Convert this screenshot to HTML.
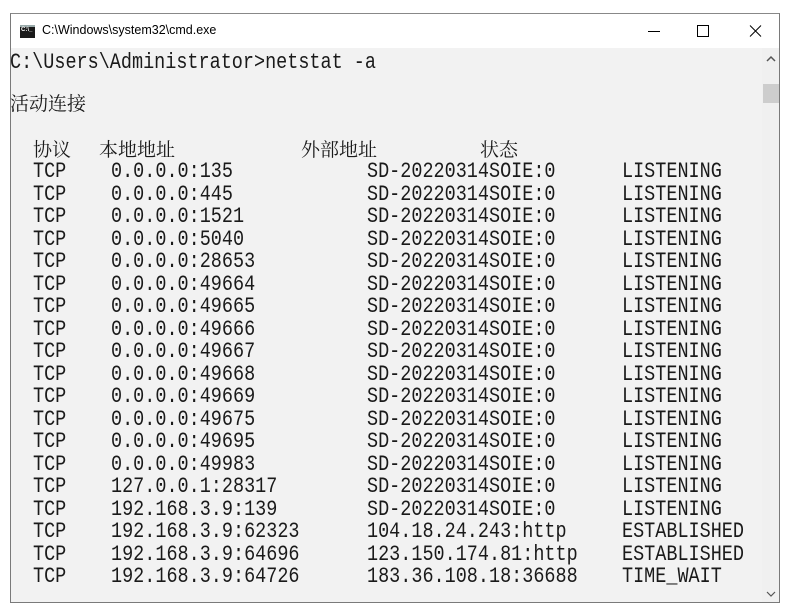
<!DOCTYPE html>
<html><head><meta charset="utf-8"><style>
body{margin:0;width:796px;height:613px;background:#fff;position:relative;overflow:hidden;font-family:"Liberation Mono","Noto Serif CJK SC",monospace}
.win{position:absolute;left:10px;top:13px;width:770px;height:590px;border:1px solid #7a7a7a;border-top-color:#888;background:#f2f2f2;box-sizing:border-box}
.title{position:absolute;left:0;top:0;right:0;height:34px;background:#fff}
.ttext{position:absolute;left:31px;top:9px;font:12.5px "Liberation Sans",sans-serif;color:#000}
.icon{position:absolute;left:9px;top:11px;width:15px;height:11px;background:#1a1a1a;border-top:2px solid #9aa}
.icon span{position:absolute;left:1px;top:0px;font:bold 6px "Liberation Sans",sans-serif;color:#fff}
.sb{position:absolute;right:0;top:34px;width:17px;bottom:0;background:#f0f0f0}
.thumb{position:absolute;right:0;top:70px;width:16px;height:19px;background:#cdcdcd}
.t{position:absolute;font-size:22px;line-height:22px;color:#1a1a1a;white-space:pre;transform:scaleX(0.84);transform-origin:0 0}
.c{font-family:"Noto Serif CJK SC","Noto Sans CJK SC",serif;font-size:19px;transform:none}
</style></head><body>
<div class="win">
<div class="title"><div class="icon"><span>C:\_</span></div><div class="ttext">C:\Windows\system32\cmd.exe</div>
<svg style="position:absolute;left:634px;top:8px" width="20" height="20"><line x1="3" y1="9.5" x2="15" y2="9.5" stroke="#000" stroke-width="1"/></svg>
<svg style="position:absolute;left:684px;top:8px" width="20" height="20"><rect x="2.5" y="3.5" width="11" height="11" fill="none" stroke="#000"/></svg>
<svg style="position:absolute;left:736px;top:8px" width="20" height="20"><path d="M3 3.5L14 14.5M14 3.5L3 14.5" stroke="#000" stroke-width="1"/></svg>
</div>
<div class="sb"><svg style="position:absolute;left:4px;top:7px" width="10" height="8"><path d="M1 6L5 2L9 6" fill="none" stroke="#555" stroke-width="1.5"/></svg>
<svg style="position:absolute;left:4px;bottom:4px" width="10" height="8"><path d="M1 2L5 6L9 2" fill="none" stroke="#555" stroke-width="1.2"/></svg></div>
<div class="thumb"></div>
</div>
<div class="t" style="left:10px;top:52px">C:\Users\Administrator&gt;netstat -a</div>
<div class="t c" style="left:10px;top:92px">活动连接</div>
<div class="t c" style="left:33px;top:138px">协议</div>
<div class="t c" style="left:99px;top:138px">本地地址</div>
<div class="t c" style="left:301px;top:138px">外部地址</div>
<div class="t c" style="left:480px;top:138px">状态</div>
<div class="t" style="left:33px;top:161px;line-height:22.5px">TCP
TCP
TCP
TCP
TCP
TCP
TCP
TCP
TCP
TCP
TCP
TCP
TCP
TCP
TCP
TCP
TCP
TCP
TCP</div>
<div class="t" style="left:111px;top:161px;line-height:22.5px">0.0.0.0:135
0.0.0.0:445
0.0.0.0:1521
0.0.0.0:5040
0.0.0.0:28653
0.0.0.0:49664
0.0.0.0:49665
0.0.0.0:49666
0.0.0.0:49667
0.0.0.0:49668
0.0.0.0:49669
0.0.0.0:49675
0.0.0.0:49695
0.0.0.0:49983
127.0.0.1:28317
192.168.3.9:139
192.168.3.9:62323
192.168.3.9:64696
192.168.3.9:64726</div>
<div class="t" style="left:367px;top:161px;line-height:22.5px">SD-20220314SOIE:0
SD-20220314SOIE:0
SD-20220314SOIE:0
SD-20220314SOIE:0
SD-20220314SOIE:0
SD-20220314SOIE:0
SD-20220314SOIE:0
SD-20220314SOIE:0
SD-20220314SOIE:0
SD-20220314SOIE:0
SD-20220314SOIE:0
SD-20220314SOIE:0
SD-20220314SOIE:0
SD-20220314SOIE:0
SD-20220314SOIE:0
SD-20220314SOIE:0
104.18.24.243:http
123.150.174.81:http
183.36.108.18:36688</div>
<div class="t" style="left:622px;top:161px;line-height:22.5px">LISTENING
LISTENING
LISTENING
LISTENING
LISTENING
LISTENING
LISTENING
LISTENING
LISTENING
LISTENING
LISTENING
LISTENING
LISTENING
LISTENING
LISTENING
LISTENING
ESTABLISHED
ESTABLISHED
TIME_WAIT</div>
</body></html>
